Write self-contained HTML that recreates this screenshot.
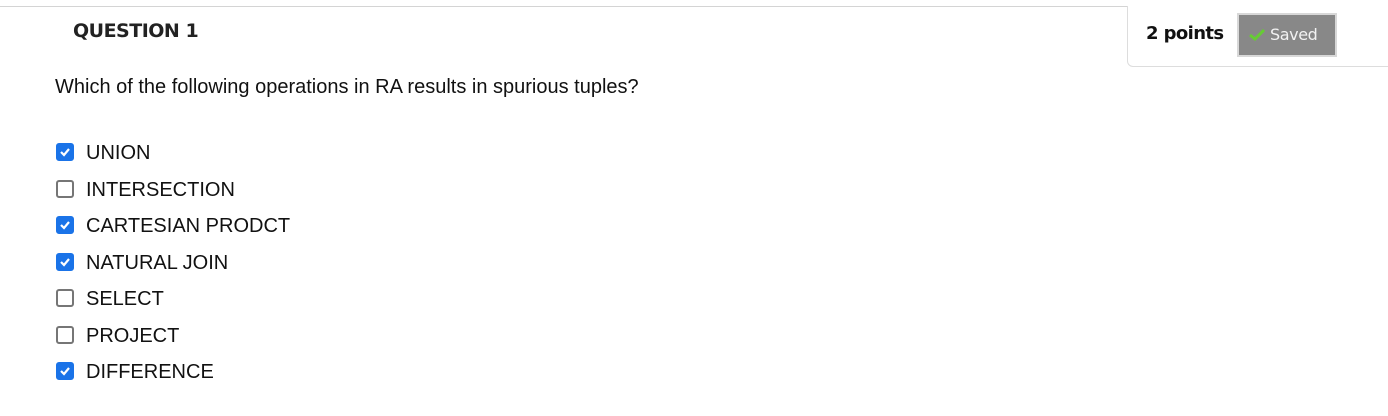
<!DOCTYPE html>
<html><head><style>
body{margin:0;width:1388px;height:416px;background:#fff;position:relative;font-family:"Liberation Sans",Arial,sans-serif;overflow:hidden}
.top{position:absolute;left:0;right:0;top:6px;height:1px;background:#d4d4d4}
.box{position:absolute;left:1127px;top:6px;width:270px;height:60px;border:1px solid #ddd;border-top:none;border-radius:0 0 0 6px;background:#fff}
.pts{position:absolute;left:1146px;top:23px;font-size:18px;font-weight:bold;color:#111;font-family:"DejaVu Sans",sans-serif;letter-spacing:-0.6px}
.saved{position:absolute;left:1237px;top:13px;width:96px;height:40px;background:#888;border:2px solid #d8d8d8;color:#f2f2f2;font-size:16px;font-family:"DejaVu Sans",sans-serif}
.saved span{position:absolute;left:31px;top:10px;letter-spacing:-0.4px}
.saved svg{position:absolute;left:10px;top:14px}
.q{position:absolute;left:73px;top:20px;font-size:19px;font-weight:bold;color:#222;font-family:"DejaVu Sans",sans-serif;letter-spacing:-0.5px}
.qt{position:absolute;left:55px;top:76px;font-size:20px;color:#111}
.opt{position:absolute;left:56px;font-size:20px;color:#111;height:22px}
.cb{position:absolute;left:0;top:2px;width:14px;height:14px;border:2px solid #767676;border-radius:3px;background:#fff}
.cb.on{background:#1a73e8;border-color:#1a73e8}
.cb svg{position:absolute;left:1px;top:1px}
.opt span{position:absolute;left:30px;top:1px;white-space:nowrap}
</style></head><body>
<div class="top"></div>
<div class="box"></div>
<div class="pts">2 points</div>
<div class="saved"><svg width="16" height="12" viewBox="0 0 16 12"><path d="M1 6 L6 10 L15 1" stroke="#6c3" stroke-width="3" fill="none"/></svg><span>Saved</span></div>
<div class="q">QUESTION 1</div>
<div class="qt">Which of the following operations in RA results in spurious tuples?</div>
<div class="opt" style="top:141px"><div class="cb on"><svg width="12" height="12" viewBox="0 0 12 12"><path d="M2 6 L5 9 L10 3" stroke="#fff" stroke-width="2.2" fill="none"/></svg></div><span>UNION</span></div>
<div class="opt" style="top:178px"><div class="cb"></div><span>INTERSECTION</span></div>
<div class="opt" style="top:214px"><div class="cb on"><svg width="12" height="12" viewBox="0 0 12 12"><path d="M2 6 L5 9 L10 3" stroke="#fff" stroke-width="2.2" fill="none"/></svg></div><span>CARTESIAN PRODCT</span></div>
<div class="opt" style="top:251px"><div class="cb on"><svg width="12" height="12" viewBox="0 0 12 12"><path d="M2 6 L5 9 L10 3" stroke="#fff" stroke-width="2.2" fill="none"/></svg></div><span>NATURAL JOIN</span></div>
<div class="opt" style="top:287px"><div class="cb"></div><span>SELECT</span></div>
<div class="opt" style="top:324px"><div class="cb"></div><span>PROJECT</span></div>
<div class="opt" style="top:360px"><div class="cb on"><svg width="12" height="12" viewBox="0 0 12 12"><path d="M2 6 L5 9 L10 3" stroke="#fff" stroke-width="2.2" fill="none"/></svg></div><span>DIFFERENCE</span></div>
</body></html>
